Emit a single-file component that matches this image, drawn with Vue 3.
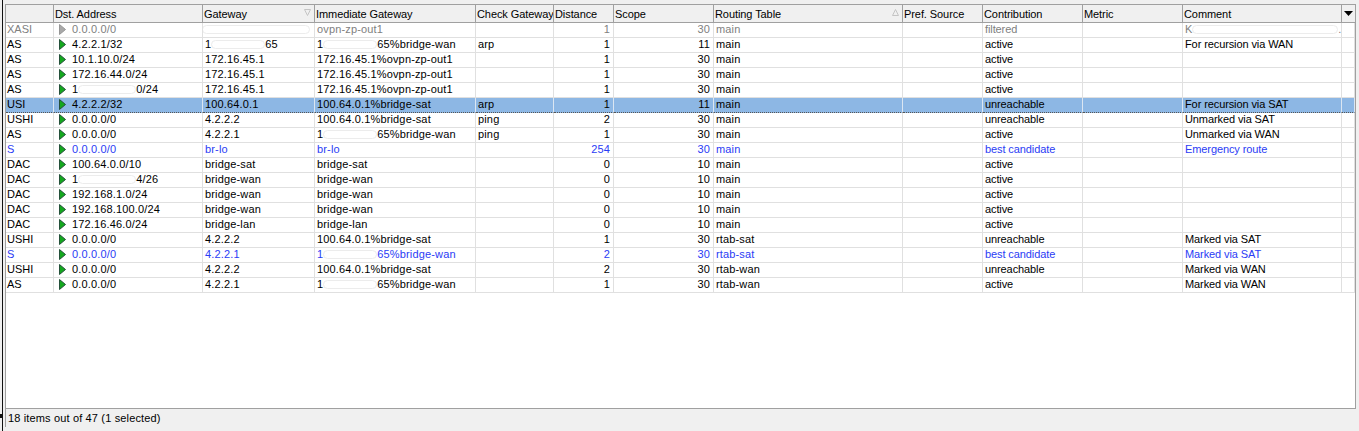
<script setup>
const columns = [
  { key: 'flags', label: '' },
  { key: 'dst', label: 'Dst. Address' },
  { key: 'gw', label: 'Gateway', sort: 'down' },
  { key: 'imm', label: 'Immediate Gateway' },
  { key: 'check', label: 'Check Gateway' },
  { key: 'dist', label: 'Distance', num: true },
  { key: 'scope', label: 'Scope', num: true },
  { key: 'table', label: 'Routing Table', sort: 'up' },
  { key: 'pref', label: 'Pref. Source' },
  { key: 'contrib', label: 'Contribution', prose: true },
  { key: 'metric', label: 'Metric' },
  { key: 'comment', label: 'Comment', prose: true },
  { key: 'end', label: '' },
]

const wan = { pre: '1', w: 54, post: '65' }
const wanImm = { pre: '1', w: 54, post: '65%bridge-wan' }
const row = (flags, dst, gw, imm, check, dist, scope, table, contrib, comment, tone = '') => ({
  flags, dst, gw, imm, check, dist, scope, table, pref: '', contrib, metric: '', comment, end: '', tone,
})

const rows = [
  row('XASI', '0.0.0.0/0', { pre: '', w: 108, post: '' }, 'ovpn-zp-out1', '', 1, 30, 'main', 'filtered', { pre: 'K', w: 146, post: '.' }, 'muted'),
  row('AS', '4.2.2.1/32', wan, wanImm, 'arp', 1, 11, 'main', 'active', 'For recursion via WAN'),
  row('AS', '10.1.10.0/24', '172.16.45.1', '172.16.45.1%ovpn-zp-out1', '', 1, 30, 'main', 'active', ''),
  row('AS', '172.16.44.0/24', '172.16.45.1', '172.16.45.1%ovpn-zp-out1', '', 1, 30, 'main', 'active', ''),
  row('AS', { pre: '1', w: 58, post: '0/24' }, '172.16.45.1', '172.16.45.1%ovpn-zp-out1', '', 1, 30, 'main', 'active', ''),
  row('USI', '4.2.2.2/32', '100.64.0.1', '100.64.0.1%bridge-sat', 'arp', 1, 11, 'main', 'unreachable', 'For recursion via SAT', 'selected'),
  row('USHI', '0.0.0.0/0', '4.2.2.2', '100.64.0.1%bridge-sat', 'ping', 2, 30, 'main', 'unreachable', 'Unmarked via SAT'),
  row('AS', '0.0.0.0/0', '4.2.2.1', wanImm, 'ping', 1, 30, 'main', 'active', 'Unmarked via WAN'),
  row('S', '0.0.0.0/0', 'br-lo', 'br-lo', '', 254, 30, 'main', 'best candidate', 'Emergency route', 'blue'),
  row('DAC', '100.64.0.0/10', 'bridge-sat', 'bridge-sat', '', 0, 10, 'main', 'active', ''),
  row('DAC', { pre: '1', w: 58, post: '4/26' }, 'bridge-wan', 'bridge-wan', '', 0, 10, 'main', 'active', ''),
  row('DAC', '192.168.1.0/24', 'bridge-wan', 'bridge-wan', '', 0, 10, 'main', 'active', ''),
  row('DAC', '192.168.100.0/24', 'bridge-wan', 'bridge-wan', '', 0, 10, 'main', 'active', ''),
  row('DAC', '172.16.46.0/24', 'bridge-lan', 'bridge-lan', '', 0, 10, 'main', 'active', ''),
  row('USHI', '0.0.0.0/0', '4.2.2.2', '100.64.0.1%bridge-sat', '', 1, 30, 'rtab-sat', 'unreachable', 'Marked via SAT'),
  row('S', '0.0.0.0/0', '4.2.2.1', wanImm, '', 2, 30, 'rtab-sat', 'best candidate', 'Marked via SAT', 'blue'),
  row('USHI', '0.0.0.0/0', '4.2.2.2', '100.64.0.1%bridge-sat', '', 2, 30, 'rtab-wan', 'unreachable', 'Marked via WAN'),
  row('AS', '0.0.0.0/0', '4.2.2.1', wanImm, '', 1, 30, 'rtab-wan', 'active', 'Marked via WAN'),
]

const isMasked = (v) => typeof v === 'object'
</script>

<template>
  <div class="app">
    <i class="speck"></i>
    <div class="window">
      <div class="table">
        <div class="tr head">
          <div v-for="c in columns" :key="c.key" class="th">
            <span>{{ c.label }}</span>
            <svg v-if="c.sort === 'down'" class="sort" width="7" height="7" viewBox="0 0 7 7">
              <path d="M0.5 0.5H6.5L3.5 6.5Z" fill="none" stroke="#c4c4c4" />
            </svg>
            <svg v-if="c.sort === 'up'" class="sort" width="7" height="7" viewBox="0 0 7 7">
              <path d="M0.5 6.5H6.5L3.5 0.5Z" fill="none" stroke="#c4c4c4" />
            </svg>
            <svg v-if="c.key === 'end'" class="menu" width="9" height="5" viewBox="0 0 9 5">
              <path d="M0 0H9L4.5 5Z" fill="#000" />
            </svg>
          </div>
        </div>
        <div v-for="(r, i) in rows" :key="i" class="tr" :class="r.tone">
          <div
            v-for="c in columns"
            :key="c.key"
            class="td"
            :class="{ num: c.num, dst: c.key === 'dst', prose: c.prose, flags: c.key === 'flags' }"
          >
            <svg v-if="c.key === 'dst'" class="state" width="7" height="11" viewBox="0 0 7 11">
              <path d="M0.5 0.5L6.5 5.5L0.5 10.5Z" :fill="r.tone === 'muted' ? '#a8a8a8' : '#14a81e'" :stroke="r.tone === 'muted' ? '#969696' : '#24503a'" stroke-width="1" />
            </svg>
            <template v-if="isMasked(r[c.key])">
              <span>{{ r[c.key].pre }}</span><span class="mask" :class="{ bare: !r[c.key].pre }" :style="{ width: r[c.key].w + 'px' }"></span><span>{{ r[c.key].post }}</span>
            </template>
            <span v-else>{{ r[c.key] }}</span>
          </div>
        </div>
      </div>
      <div class="status">18 items out of 47 (1 selected)</div>
    </div>
  </div>
</template>

<style>
html, body { margin: 0; background: #f0f0f0; }
</style>

<style scoped>
.app {
  position: relative;
  box-sizing: border-box;
  width: 1359px;
  height: 431px;
  overflow: hidden;
  padding: 4px 3px 0 5px;
  background: #f0f0f0;
  font: 11px/15px "Liberation Sans", Arial, sans-serif;
  letter-spacing: 0.15px;
  color: #000;
}
.app::before {
  content: "";
  position: absolute;
  left: 2px;
  top: 0;
  bottom: 0;
  width: 1px;
  background: #111;
}
.speck {
  position: absolute;
  left: 0;
  top: 414px;
  width: 3px;
  height: 4px;
  background: #111;
}
.window {
  display: flex;
  flex-direction: column;
  height: 423px;
  border-left: 1px solid #a0a0a0;
}
.table {
  box-sizing: border-box;
  height: 405px;
  flex: none;
  background: #fff;
  border-top: 1px solid #a0a0a0;
  border-right: 1px solid #a0a0a0;
  border-bottom: 1px solid #a0a0a0;
}
.tr {
  display: grid;
  grid-template-columns: 48px 149px 112px 161px 78px 60px 100px 189px 80px 100px 100px 159px 13px;
  height: 15px;
}
.tr.head {
  height: 17px;
  background: #f0f0f0;
  border-bottom: 1px solid #a0a0a0;
}
.th {
  position: relative;
  box-sizing: border-box;
  padding: 2px 0 0 1px;
  line-height: 14px;
  letter-spacing: -0.08px;
  white-space: nowrap;
  overflow: hidden;
  border-right: 1px solid #a0a0a0;
}
.th:last-child { border-right: 0; }
.sort {
  position: absolute;
  right: 3px;
  top: 4px;
}
.menu {
  position: absolute;
  left: 2px;
  top: 6px;
}
.td {
  box-sizing: border-box;
  height: 15px;
  padding: 0 3px 0 2px;
  line-height: 13px;
  white-space: nowrap;
  overflow: hidden;
  border-right: 1px solid #e0e0e0;
  border-bottom: 1px solid #e0e0e0;
}
.td.num { text-align: right; }
.td.prose { letter-spacing: -0.1px; }
.td.flags { padding-left: 1px; letter-spacing: 0; }
.td.dst {
  display: flex;
  align-items: flex-start;
  padding-left: 5px;
}
.state {
  flex: none;
  margin: 1px 6px 0 0;
}
.mask {
  display: inline-block;
  flex: none;
  box-sizing: border-box;
  height: 9px;
  vertical-align: -1px;
  background: #fff;
  border: 1px solid #ececec;
  border-radius: 5px;
}
.dst .mask { margin-top: 2px; }
.mask.bare { margin-left: -3px; }
.muted { color: #808080; }
.blue { color: #2a3cf5; }
.selected .td {
  background: #8db7e4;
  border-right-color: #dbe6f2;
  border-bottom: 1px dotted #555;
}
.selected { box-shadow: inset 0 1px 0 #777; }
.status {
  height: 20px;
  padding-left: 2px;
  line-height: 19px;
  background: #f0f0f0;
}
</style>
